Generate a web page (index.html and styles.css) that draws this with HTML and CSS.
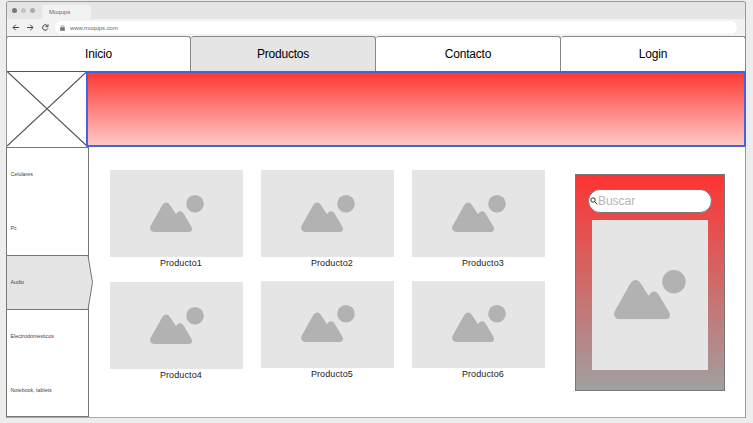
FILE: index.html
```
<!DOCTYPE html>
<html lang="es">
<head>
<meta charset="utf-8">
<title>Moqups</title>
<link rel="stylesheet" href="styles.css">
</head>
<body>
<svg width="0" height="0" class="defs">
  <symbol id="picture" viewBox="0 0 54 37.2">
    <path d="M5 37C.5 37-1 33.500.8 30.500L12 10.500C14.500 6.500 18 6.500 20.300 10.500L26 19.300C28 15.500 31.500 15 33.500 18.500L41.300 31.500C43 34.500 41.500 37 38.500 37Z"/>
    <circle cx="45" cy="8.800" r="8.800"/>
  </symbol>
</svg>
<div class="window">
  <div class="tabbar">
    <i class="dot dark"></i><i class="dot"></i><i class="dot mid"></i>
    <div class="tab">Moqups</div>
  </div>
  <div class="toolbar">
    <svg class="controls" viewBox="0 0 48 17" width="48" height="17">
      <path d="M12 8.500H6M8.800 5.700L6 8.500L8.800 11.300M20 8.500H26M23.200 5.700L26 8.500L23.200 11.300"/>
      <path d="M40.200 6.600A2.700 2.700 0 1 0 40.800 9.500M41 5.300V7.700H38.600"/>
    </svg>
    <div class="address">
      <svg viewBox="0 0 6 7" width="5" height="6"><path class="body" d="M.5 3H5.500V6.600H.5Z"/><path d="M1.500 3V2A1.500 1.500 0 0 1 4.500 2V3"/></svg>
      <span>www.moqups.com</span>
    </div>
  </div>
  <nav class="nav">
    <a>Inicio</a><a class="active">Productos</a><a>Contacto</a><a>Login</a>
  </nav>
  <header class="hero">
    <svg class="logo" viewBox="0 0 80 76" width="80" height="76"><path d="M0 .5H80M0 .5L80 75M80 .5L0 75"/></svg>
    <div class="banner"></div>
  </header>
  <main class="main">
    <aside class="sidebar">
      <a>Celulares</a>
      <a>Pc</a>
      <a class="current"><svg viewBox="0 0 88 55" width="88" height="55"><path d="M.5 .5H82L86.500 27.500L82 54.500H.5Z"/></svg><span>Audio</span></a>
      <a>Electrodomésticos</a>
      <a>Notebook, tablets</a>
    </aside>
    <section class="products">
      <div class="column first">
        <figure><div class="thumb"><svg><use href="#picture"/></svg></div><figcaption>Producto1</figcaption></figure>
        <figure><div class="thumb"><svg><use href="#picture"/></svg></div><figcaption>Producto4</figcaption></figure>
      </div>
      <div class="column">
        <figure><div class="thumb"><svg><use href="#picture"/></svg></div><figcaption>Producto2</figcaption></figure>
        <figure><div class="thumb"><svg><use href="#picture"/></svg></div><figcaption>Producto5</figcaption></figure>
      </div>
      <div class="column">
        <figure><div class="thumb"><svg><use href="#picture"/></svg></div><figcaption>Producto3</figcaption></figure>
        <figure><div class="thumb"><svg><use href="#picture"/></svg></div><figcaption>Producto6</figcaption></figure>
      </div>
    </section>
    <section class="finder">
      <div class="search">
        <svg viewBox="0 0 8 8" width="8" height="8"><circle cx="3" cy="3" r="2.200"/><path d="M4.700 4.700L7.300 7.300"/></svg>
        <span>Buscar</span>
      </div>
      <div class="preview"><svg><use href="#picture"/></svg></div>
    </section>
  </main>
</div>
</body>
</html>
```
FILE: styles.css
```
* { box-sizing: border-box; }
body {
  margin: 0;
  height: 423px;
  padding: 1px 0 0 6px;
  overflow: hidden;
  background: #ededed;
  font-family: "Liberation Sans", Arial, sans-serif;
  color: #000;
}
.defs { position: absolute; }
.window {
  width: 740px;
  height: 417px;
  border: 1px solid #999;
  border-bottom-color: #aaa;
  border-radius: 3px 3px 0 0;
  background: #fff;
}
.tabbar {
  display: flex;
  align-items: center;
  gap: 4px;
  height: 17px;
  padding-left: 5px;
  background: #e5e5e5;
  border-radius: 2px 2px 0 0;
}
.dot { width: 5px; height: 5px; border-radius: 50%; background: #c4c4c4; }
.dot.dark { background: #777; }
.dot.mid { background: #aaa; }
.tab {
  align-self: flex-end;
  width: 49px;
  height: 14px;
  margin-left: 3px;
  padding-left: 7px;
  border-radius: 2px 2px 0 0;
  background: #f2f2f2;
  color: #666;
  font-size: 6px;
  line-height: 15px;
}
.toolbar { display: flex; align-items: center; height: 17px; background: #f2f2f2; }
.controls { fill: none; stroke: #444; stroke-width: 1; }
.address {
  display: flex;
  align-items: center;
  gap: 5px;
  width: 682px;
  height: 13px;
  padding-left: 5px;
  border-radius: 7px;
  background: #fff;
  color: #666;
  font-size: 5.900px;
}
.address svg { fill: none; stroke: #777; stroke-width: .8; }
.address .body { fill: #777; }
.nav { display: flex; height: 35px; margin: 0 -1px; }
.nav a {
  width: 185px;
  border: 1px solid #888;
  border-left-width: 0;
  border-bottom: 0;
  border-radius: 3px 3px 0 0;
  background: #fff;
  font-size: 12px;
  letter-spacing: -.2px;
  line-height: 35px;
  text-align: center;
}
.nav a:first-child { border-left-width: 1px; }
.nav .active { background: #e5e5e5; }
.hero { display: flex; height: 76px; margin-right: -1px; }
.logo { fill: none; stroke: #555; stroke-width: 1.200; }
.banner {
  flex: 1;
  margin-left: -1px;
  border: 2px solid #4365da;
  background: linear-gradient(#ff3833, #ffc9c7);
}
.main { display: flex; height: 269px; }
.sidebar {
  width: 83px;
  height: 270px;
  margin-left: -1px;
  border: 1px solid #777;
}
.sidebar a {
  display: block;
  height: 54px;
  padding-left: 3.500px;
  color: #444;
  font-size: 5.300px;
  line-height: 53px;
  white-space: nowrap;
}
.sidebar .current { position: relative; }
.current svg {
  position: absolute;
  left: -1px;
  top: -1px;
  fill: #e5e5e5;
  stroke: #777;
  stroke-width: 1;
}
.current span { position: relative; }
.products { display: flex; gap: 18px; padding: 23px 0 0 21.400px; }
.column { display: flex; flex-direction: column; gap: 9.500px; width: 133px; }
.column.first { gap: 11px; }
figure { width: 133px; height: 101px; margin: 0; }
.thumb { height: 87px; padding: 24.700px 0 0 39.500px; background: #e5e5e5; }
.thumb svg { display: block; width: 54px; height: 37.200px; fill: #b2b2b2; }
figcaption {
  padding-left: 8px;
  color: #222;
  font-size: 9px;
  letter-spacing: .1px;
  line-height: 13px;
  text-align: center;
}
.finder {
  width: 150px;
  height: 217px;
  margin: 27px 0 0 29.500px;
  padding: 13.600px 0 0 12px;
  border: 1px solid #777;
  background: linear-gradient(#ff3333, #a0a0a0);
}
.search {
  display: flex;
  align-items: center;
  width: 124px;
  height: 24px;
  padding-left: 1px;
  border: 1px solid #777;
  border-radius: 12px;
  background: #fff;
  color: #b5b5b5;
  font-size: 12px;
}
.search svg { fill: none; stroke: #333; stroke-width: 1; }
.preview {
  width: 116px;
  height: 150px;
  margin: 7.400px 0 0 4px;
  padding: 50.500px 0 0 22px;
  background: #e5e5e5;
}
.preview svg { display: block; width: 72px; height: 49.500px; fill: #b2b2b2; }
```
